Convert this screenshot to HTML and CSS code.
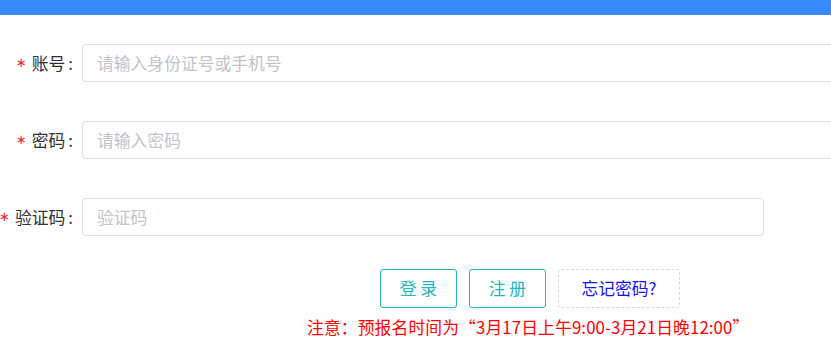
FILE: index.html
```html
<!DOCTYPE html>
<html lang="zh-CN">
<head>
    <title>登录</title>
    <meta charset="utf-8"/>
    <link rel="stylesheet" href="styles.css">
</head>
<body>

<div class="topbar"></div>

<div class="login-form">
    <div class="form-item">
        <label class="form-label"><span class="req">∗</span>账号<span class="colon">:</span></label>
        <input class="form-input input-wide" type="text" placeholder="请输入身份证号或手机号">
    </div>
    <div class="form-item">
        <label class="form-label"><span class="req">∗</span>密码<span class="colon">:</span></label>
        <input class="form-input input-wide" type="password" placeholder="请输入密码">
    </div>
    <div class="form-item">
        <label class="form-label"><span class="req">∗</span>验证码<span class="colon">:</span></label>
        <input class="form-input input-code" type="text" placeholder="验证码">
    </div>
</div>

<div class="actions">
    <button class="btn btn-teal">登 录</button>
    <button class="btn btn-teal">注 册</button>
    <button class="btn btn-dashed">忘记密码?</button>
</div>

<p class="notice">注意：预报名时间为“3月17日上午9:00-3月21日晚12:00”</p>

</body>
</html>
```

FILE: styles.css
```css
body {
    margin: 0;
    overflow: hidden;
    font-family: "Noto Sans CJK SC", "Noto Sans", sans-serif;
    font-size: 16.8px;
    color: #303133;
    background: #fff;
}

.topbar {
    height: 15px;
    background: #388bfd;
}

/* 表单 */
.login-form {
    display: flex;
    flex-direction: column;
    gap: 38.4px;
    padding-top: 29px;
}

.form-item {
    display: flex;
    align-items: center;
}

.form-label {
    display: flex;
    align-items: center;
    justify-content: flex-end;
    flex: none;
    width: 82px;
    box-sizing: border-box;
    padding-right: 9px;
    white-space: nowrap;
    line-height: 38px;
}

.req {
    color: #f5222d;
    font-family: "DejaVu Sans", sans-serif;
    font-size: 13px;
    margin-right: 5px;
}

.colon {
    margin-left: 3px;
}

.form-input {
    box-sizing: border-box;
    height: 38.4px;
    padding: 0 14px;
    border: 1px solid #dcdfe6;
    border-radius: 4px;
    font-family: inherit;
    font-size: 16.8px;
    color: #606266;
    outline: none;
    flex: none;
}

.form-input::placeholder {
    color: #c0c4cc;
}

.input-wide {
    width: 780px;
}

.input-code {
    width: 682px;
}

/* 按钮 */
.actions {
    display: flex;
    gap: 12px;
    margin-top: 33.3px;
    padding-left: 380px;
}

.btn {
    box-sizing: border-box;
    height: 38.4px;
    padding: 0;
    background: #fff;
    font-family: inherit;
    font-size: 16.8px;
    border-radius: 3px;
    cursor: pointer;
}

.btn-teal {
    width: 77px;
    color: #1cb8c2;
    border: 1px solid #1cb8c2;
}

.btn-dashed {
    width: 122px;
    color: #1414f0;
    border: 1px dashed #d9d9d9;
}

.notice {
    margin: 7.7px 0 0;
    padding-left: 307px;
    line-height: 25px;
    letter-spacing: 0.12px;
    color: #ff0000;
}
```
